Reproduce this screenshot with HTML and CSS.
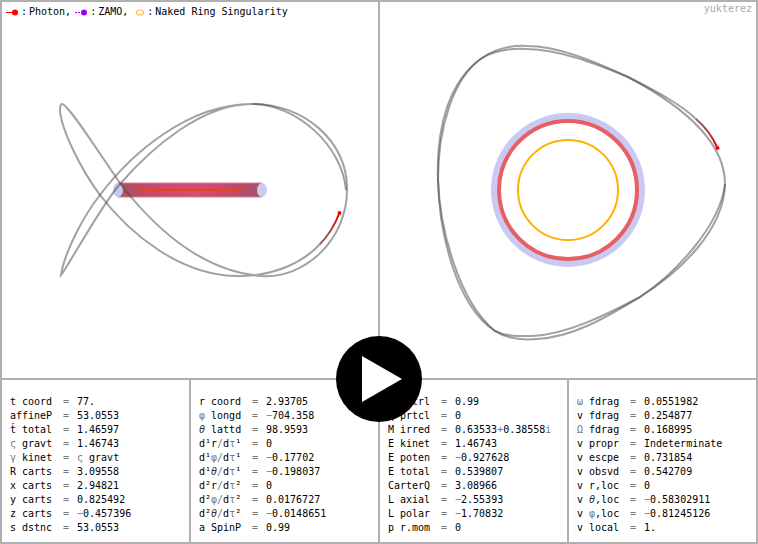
FILE: index.html
```html
<!DOCTYPE html>
<html lang="en">
<head>
<meta charset="utf-8">
<title>Photon orbit, naked ring singularity</title>
<link rel="stylesheet" href="styles.css">
</head>
<body>
<main class="frame">
  <section class="plots">
    <div class="panel">
      <svg class="plot" viewBox="2 2 376 376" role="img" aria-label="Side view of the orbit">
        <defs>
          <linearGradient id="tube">
            <stop offset="0" stop-color="#a84f63"/>
            <stop offset=".25" stop-color="#c94a68"/>
            <stop offset=".55" stop-color="#d84d72"/>
            <stop offset=".8" stop-color="#c24a66"/>
            <stop offset="1" stop-color="#9c5470"/>
          </linearGradient>
          <linearGradient id="tail1" gradientUnits="userSpaceOnUse" x1="320" y1="243" x2="339" y2="213">
            <stop offset="0" stop-color="#8c6a6a"/>
            <stop offset="1" stop-color="#e00000"/>
          </linearGradient>
        </defs>
        <rect x="118" y="183" width="144" height="14" fill="url(#tube)"/>
        <path d="M118 183H262M118 197H262" stroke="#e07a90" stroke-width="1" fill="none"/>
        <ellipse cx="118" cy="190" rx="5" ry="7" fill="#c9c8ee"/>
        <ellipse cx="262" cy="190" rx="5" ry="7" fill="#cccbea"/>
        <path d="M139 190H241" stroke="#e8431c" stroke-width="2"/>
        <path class="orbit" d="M347 188C347 141 304 104 252 104C187 104 130 155 100 195C85 214 65 250 61 275C66 270 100 207 120 184C153 146 203 104 252 104"/>
        <path class="orbit" d="M252 104C296 104 342 145 346 190"/>
        <path class="orbit" d="M347 188C348 240 304 279 262 276C205 272 159 233 122 186C95 147 68 104 62 104C61 104 60 106 60 110C61 130 82 171 100 195C129 233 180 276 238 276C277 276 305 261 321 243"/>
        <path d="M320 244Q332 232 339 214" stroke="url(#tail1)" stroke-width="2" fill="none"/>
        <circle cx="339.500" cy="213" r="2" fill="#f00"/>
      </svg>
      <ul class="legend">
        <li><svg width="12" height="8" viewBox="0 0 12 8" aria-hidden="true"><path d="M0 4.500H6" stroke="#f00"/><circle cx="9" cy="4.500" r="3" fill="#f00"/></svg><b>:</b>Photon,</li>
        <li><svg width="12" height="8" viewBox="0 0 12 8" aria-hidden="true"><path d="M0 4.500H6" stroke="#90f" stroke-dasharray="2 1"/><circle cx="9" cy="4.500" r="3" fill="#90f"/></svg><b>:</b>ZAMO,</li>
        <li><svg width="12" height="8" viewBox="0 0 12 8" aria-hidden="true"><ellipse cx="8" cy="4.500" rx="3.500" ry="2.500" fill="none" stroke="#ffb84d" stroke-width="1.200"/></svg><b>:</b>Naked Ring Singularity</li>
      </ul>
    </div>
    <div class="panel">
      <svg class="plot" viewBox="380 2 376 376" role="img" aria-label="Top view of the orbit">
        <defs>
          <linearGradient id="tail2" gradientUnits="userSpaceOnUse" x1="697" y1="120" x2="717" y2="148">
            <stop offset="0" stop-color="#8c6a6a"/>
            <stop offset="1" stop-color="#e00000"/>
          </linearGradient>
        </defs>
        <circle cx="568" cy="190" r="73" fill="none" stroke="#cac9f3" stroke-width="8"/>
        <circle cx="568" cy="190" r="69" fill="none" stroke="#e65f62" stroke-width="4"/>
        <circle cx="568" cy="190" r="50" fill="none" stroke="#ffb000" stroke-width="2"/>
        <path class="orbit" d="M725 184C725 140 681 105 628 77C592 60 557 46 527 46C510 45 494 50 482 58C453 78 438 128 438 180C439 230 455 305 495 331C507 337 520 336 533 336C568 334 608 314 640 297C681 271 724 230 725 184"/>
        <path class="orbit" d="M725 184C720 226 676 273 640 297C610 315 575 337 537 339C525 340 507 339 495 331C459 302 440 230 438 180C436 125 450 80 482 58C494 51 511 48 527 49C560 50 592 62 628 77C658 92 682 105 697 120"/>
        <path d="M696 119Q710 131 717 147" stroke="url(#tail2)" stroke-width="2" fill="none"/>
        <circle cx="717.500" cy="148" r="2" fill="#f00"/>
      </svg>
      <span class="credit">yukterez</span>
    </div>
  </section>
  <section class="stats">
    <div class="panel"><table>
      <tr><th scope="row">t coord</th><td>=</td><td>77.</td></tr>
      <tr><th scope="row">affineP</th><td>=</td><td>53.0553</td></tr>
      <tr><th scope="row">ṫ total</th><td>=</td><td>1.46597</td></tr>
      <tr><th scope="row"><i>ς</i> gravt</th><td>=</td><td>1.46743</td></tr>
      <tr><th scope="row"><i>γ</i> kinet</th><td>=</td><td><i>ς</i> gravt</td></tr>
      <tr><th scope="row">R carts</th><td>=</td><td>3.09558</td></tr>
      <tr><th scope="row">x carts</th><td>=</td><td>2.94821</td></tr>
      <tr><th scope="row">y carts</th><td>=</td><td>0.825492</td></tr>
      <tr><th scope="row">z carts</th><td>=</td><td><i>−</i>0.457396</td></tr>
      <tr><th scope="row">s dstnc</th><td>=</td><td>53.0553</td></tr>
    </table></div>
    <div class="panel"><table>
      <tr><th scope="row">r coord</th><td>=</td><td>2.93705</td></tr>
      <tr><th scope="row"><i>φ</i> longd</th><td>=</td><td><i>−</i>704.358</td></tr>
      <tr><th scope="row"><em>θ</em> lattd</th><td>=</td><td>98.9593</td></tr>
      <tr><th scope="row">d¹r<i>/</i>d<i>τ</i>¹</th><td>=</td><td>0</td></tr>
      <tr><th scope="row">d¹<i>φ/</i>d<i>τ</i>¹</th><td>=</td><td><i>−</i>0.17702</td></tr>
      <tr><th scope="row">d¹<em>θ</em><i>/</i>d<i>τ</i>¹</th><td>=</td><td><i>−</i>0.198037</td></tr>
      <tr><th scope="row">d²r<i>/</i>d<i>τ</i>²</th><td>=</td><td>0</td></tr>
      <tr><th scope="row">d²<i>φ/</i>d<i>τ</i>²</th><td>=</td><td>0.0176727</td></tr>
      <tr><th scope="row">d²<em>θ</em><i>/</i>d<i>τ</i>²</th><td>=</td><td><i>−</i>0.0148651</td></tr>
      <tr><th scope="row">a SpinP</th><td>=</td><td>0.99</td></tr>
    </table></div>
    <div class="panel"><table>
      <tr><th scope="row">M cntrl</th><td>=</td><td>0.99</td></tr>
      <tr><th scope="row">q prtcl</th><td>=</td><td>0</td></tr>
      <tr><th scope="row">M irred</th><td>=</td><td>0.63533<i>+</i>0.38558<i>i</i></td></tr>
      <tr><th scope="row">E kinet</th><td>=</td><td>1.46743</td></tr>
      <tr><th scope="row">E poten</th><td>=</td><td><i>−</i>0.927628</td></tr>
      <tr><th scope="row">E total</th><td>=</td><td>0.539807</td></tr>
      <tr><th scope="row">CarterQ</th><td>=</td><td>3.08966</td></tr>
      <tr><th scope="row">L axial</th><td>=</td><td><i>−</i>2.55393</td></tr>
      <tr><th scope="row">L polar</th><td>=</td><td><i>−</i>1.70832</td></tr>
      <tr><th scope="row">p r.mom</th><td>=</td><td>0</td></tr>
    </table></div>
    <div class="panel"><table>
      <tr><th scope="row"><i>ω</i> fdrag</th><td>=</td><td>0.0551982</td></tr>
      <tr><th scope="row">v fdrag</th><td>=</td><td>0.254877</td></tr>
      <tr><th scope="row"><i>Ω</i> fdrag</th><td>=</td><td>0.168995</td></tr>
      <tr><th scope="row">v propr</th><td>=</td><td>Indeterminate</td></tr>
      <tr><th scope="row">v escpe</th><td>=</td><td>0.731854</td></tr>
      <tr><th scope="row">v obsvd</th><td>=</td><td>0.542709</td></tr>
      <tr><th scope="row">v r,loc</th><td>=</td><td>0</td></tr>
      <tr><th scope="row">v <em>θ</em>,loc</th><td>=</td><td><i>−</i>0.58302911</td></tr>
      <tr><th scope="row">v <i>φ</i>,loc</th><td>=</td><td><i>−</i>0.81245126</td></tr>
      <tr><th scope="row">v local</th><td>=</td><td>1.</td></tr>
    </table></div>
    <button class="play" type="button" aria-label="Play">
      <svg viewBox="0 0 86 86" aria-hidden="true"><path d="M26 20L66 43L26 66Z" fill="#fff"/></svg>
    </button>
  </section>
</main>
</body>
</html>
```
FILE: styles.css
```css
* {
  box-sizing: border-box;
}

body {
  margin: 0;
  background: #fff;
  color: #000;
  font: 10px/14px "DejaVu Sans Mono", "Liberation Mono", monospace;
}

.frame {
  display: grid;
  gap: 2px;
  padding: 2px;
  background: #b0b0b0;
}

.plots,
.stats {
  position: relative;
  display: grid;
  gap: 2px;
}

.plots {
  grid-template-columns: repeat(2, 1fr);
}

.stats {
  grid-template-columns: repeat(4, 1fr);
}

.panel {
  position: relative;
  min-width: 0;
  background: #fff;
}

.stats .panel {
  padding: 15px 0 7px 8px;
}

.plot {
  display: block;
  width: 100%;
}

.orbit {
  fill: none;
  stroke: #444;
  stroke-opacity: 0.5;
  stroke-width: 2;
}

.legend {
  position: absolute;
  top: 3px;
  left: 4px;
  display: flex;
  gap: 4px;
  margin: 0;
  padding: 0;
  list-style: none;
  white-space: nowrap;
}

.legend li {
  display: flex;
  align-items: center;
  gap: 3px;
}

.legend b {
  width: 5px;
  font-weight: normal;
}

.credit {
  position: absolute;
  top: 0;
  right: 4px;
  color: #aaa;
}

table {
  border-collapse: collapse;
}

th,
td {
  padding: 0;
  font-weight: normal;
  text-align: left;
  white-space: nowrap;
}

th {
  width: 53px;
}

th + td {
  width: 14px;
  color: #777;
}

tr {
  height: 14px;
}

i,
em {
  line-height: 1;
}

i {
  color: #777;
  font-style: normal;
}

em {
  color: #333;
  font-style: italic;
}

.play {
  position: absolute;
  top: -1px;
  left: 50%;
  width: 86px;
  height: 86px;
  padding: 0;
  border: 0;
  border-radius: 50%;
  background: #000;
  transform: translate(-50%, -50%);
  cursor: pointer;
}

.play svg {
  display: block;
  width: 100%;
}
```
